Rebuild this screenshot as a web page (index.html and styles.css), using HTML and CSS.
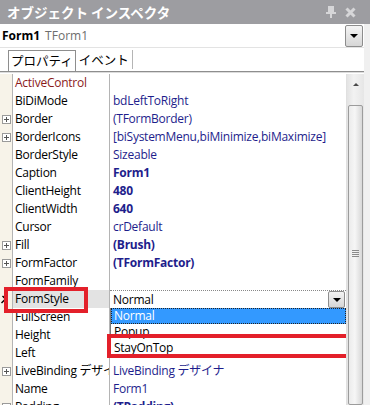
FILE: index.html
```html
<!DOCTYPE html>
<html lang="ja">

<head>
    <meta charset="UTF-8">
    <title>オブジェクト インスペクタ</title>
    <link rel="stylesheet" href="styles.css">
</head>

<body>

    <!-- Title bar -->
    <div class="titlebar">
        <span class="title">オブジェクト インスペクタ</span>
        <span class="title-icons">
            <svg width="10" height="12" viewBox="0 0 10 12">
                <rect x="2" y="0" width="6" height="6" fill="#d6d6d8"/>
                <rect x="0" y="6" width="10" height="2" fill="#d6d6d8"/>
                <rect x="4" y="8" width="2" height="4" fill="#d6d6d8"/>
            </svg>
            <svg width="11" height="11" viewBox="0 0 11 11">
                <path d="M1.5 1.5 L9.5 9.5 M9.5 1.5 L1.5 9.5" stroke="#d6d6d8" stroke-width="3"/>
            </svg>
        </span>
    </div>

    <div class="panel">
        <!-- Object selector -->
        <div class="selector">
            <span class="obj-name">Form1</span>
            <span class="obj-type">TForm1</span>
            <span class="combo-btn big"><i class="tri"></i></span>
        </div>

        <!-- Tabs -->
        <div class="tabs">
            <span class="tab active">プロパティ</span>
            <span class="tab">イベント</span>
        </div>

        <!-- Property grid -->
        <div class="grid-wrap">
            <div class="grid">
                <div class="row"><span class="gut"></span><span class="name red">ActiveControl</span><span class="val"></span></div>
                <div class="row"><span class="gut"></span><span class="name">BiDiMode</span><span class="val">bdLeftToRight</span></div>
                <div class="row"><span class="gut"><i class="plus"></i></span><span class="name">Border</span><span class="val">(TFormBorder)</span></div>
                <div class="row"><span class="gut"><i class="plus"></i></span><span class="name">BorderIcons</span><span class="val">[biSystemMenu,biMinimize,biMaximize]</span></div>
                <div class="row"><span class="gut"></span><span class="name">BorderStyle</span><span class="val">Sizeable</span></div>
                <div class="row"><span class="gut"></span><span class="name">Caption</span><span class="val bold">Form1</span></div>
                <div class="row"><span class="gut"></span><span class="name">ClientHeight</span><span class="val bold">480</span></div>
                <div class="row"><span class="gut"></span><span class="name">ClientWidth</span><span class="val bold">640</span></div>
                <div class="row"><span class="gut"></span><span class="name">Cursor</span><span class="val">crDefault</span></div>
                <div class="row"><span class="gut"><i class="plus"></i></span><span class="name">Fill</span><span class="val bold">(Brush)</span></div>
                <div class="row"><span class="gut"><i class="plus"></i></span><span class="name">FormFactor</span><span class="val bold">(TFormFactor)</span></div>
                <div class="row"><span class="gut"></span><span class="name">FormFamily</span><span class="val"></span></div>
                <div class="row current">
                    <span class="gut"><i class="pointer"></i></span>
                    <span class="name">FormStyle</span>
                    <span class="val edit">Normal<span class="combo-btn"><i class="tri"></i></span></span>
                </div>
                <div class="row"><span class="gut"></span><span class="name">FullScreen</span><span class="val"></span></div>
                <div class="row"><span class="gut"></span><span class="name">Height</span><span class="val"></span></div>
                <div class="row"><span class="gut"></span><span class="name">Left</span><span class="val"></span></div>
                <div class="row"><span class="gut"><i class="plus"></i></span><span class="name">LiveBinding デザイナ</span><span class="val">LiveBinding デザイナ</span></div>
                <div class="row"><span class="gut"></span><span class="name">Name</span><span class="val">Form1</span></div>
                <div class="row"><span class="gut"><i class="plus"></i></span><span class="name">Padding</span><span class="val bold">(TPadding)</span></div>

                <!-- Open drop-down list of FormStyle -->
                <div class="droplist">
                    <div class="item selected">Normal</div>
                    <div class="item">Popup</div>
                    <div class="item">StayOnTop</div>
                </div>

                <!-- Red annotation boxes -->
                <div class="mark mark-name"></div>
                <div class="mark mark-item"></div>
            </div>

            <!-- Vertical scrollbar -->
            <div class="scrollbar">
                <div class="arrow-up"></div>
                <div class="thumb"><i class="grip"></i></div>
            </div>
        </div>
    </div>

</body>

</html>
```

FILE: styles.css
```css
body {
    margin: 0;
    width: 370px;
    height: 405px;
    overflow: hidden;
    background-color: #f0f0f0;
    font-family: 'Open Sans', 'Noto Sans CJK JP', sans-serif;
    font-size: 12px;
    color: #000;
}

/* Title bar */
.titlebar {
    height: 24px;
    background-color: #9d9da1;
    display: flex;
    align-items: center;
    justify-content: space-between;
    padding: 0 14px 0 7px;
}

.title {
    color: #fff;
    font-family: 'Noto Sans CJK JP', sans-serif;
    font-weight: bold;
    font-size: 13.5px;
}

.title-icons {
    display: flex;
    align-items: center;
    gap: 9px;
}

/* Main panel */
.panel {
    width: 364px;
    background-color: #fff;
}

.selector {
    height: 23px;
    display: flex;
    align-items: center;
    padding-left: 2px;
    border-bottom: 1px solid #e3e3e3;
}

.obj-name {
    font-weight: bold;
    margin-right: 5px;
}

.obj-type {
    color: #6d6d6d;
}

.combo-btn {
    margin-left: auto;
    width: 15px;
    height: 15px;
    border: 1px solid #8d8d8d;
    border-radius: 2px;
    background: linear-gradient(#f4f4f4, #d6d6d6);
    display: flex;
    align-items: center;
    justify-content: center;
}

.combo-btn.big {
    width: 16px;
    height: 20px;
    margin-right: 1px;
}

.tri {
    width: 0;
    height: 0;
    border-left: 4px solid transparent;
    border-right: 4px solid transparent;
    border-top: 4px solid #000;
}

/* Tabs */
.tabs {
    height: 23px;
    display: flex;
    align-items: flex-end;
    padding-left: 8px;
    border-bottom: 1px solid #8e8e8e;
    box-shadow: 0 1px 0 #dcdcdc;
    font-family: 'Noto Sans CJK JP', sans-serif;
    font-size: 12.5px;
}

.tab {
    height: 19px;
    line-height: 19px;
    padding: 0 3px;
    border-right: 1px solid #b5b5b5;
    margin-bottom: 2px;
}

.tab.active {
    border: 1px solid #8e8e8e;
    border-bottom: none;
    margin-bottom: 0;
    height: 20px;
    padding: 0 2px;
}

/* Property grid */
.grid-wrap {
    display: flex;
    margin-top: 2px;
}

.grid {
    position: relative;
    flex: 1;
    height: 331px;
    overflow: hidden;
    letter-spacing: -0.25px;
}

.row {
    display: grid;
    grid-template-columns: 13px 97px 1fr;
    height: 18px;
    line-height: 18px;
}

.gut {
    background-color: #f7f3e9;
    border-right: 1px solid #b4b4b4;
    display: flex;
    align-items: center;
    justify-content: center;
}

.name {
    padding-left: 2px;
    border-right: 1px solid #b4b4b4;
    white-space: nowrap;
    overflow: hidden;
}

.name.red {
    color: #8b1a1a;
}

.val {
    padding-left: 3px;
    color: #1e1e8c;
    white-space: nowrap;
    overflow: hidden;
}

.val.bold {
    font-weight: bold;
}

.plus {
    width: 7px;
    height: 7px;
    border: 1px solid #9a9a9a;
    background:
        linear-gradient(#555, #555) center / 5px 1px no-repeat,
        linear-gradient(#555, #555) center / 1px 5px no-repeat,
        #fff;
}

.row.current .name {
    background-color: #e3e3e3;
}

.pointer {
    width: 5px;
    height: 7px;
    border-right: 2px solid #000;
    border-top: 2px solid #000;
    transform: scale(0.7) rotate(45deg);
    margin-left: -8px;
}

.val.edit {
    color: #000;
    display: flex;
    align-items: center;
    border-top: 1px dotted #888;
    padding-right: 1px;
}

/* Drop-down list */
.droplist {
    position: absolute;
    left: 110px;
    top: 234px;
    width: 235px;
    border: 1px solid #7a7a7a;
    border-top: none;
    background-color: #fff;
}

.item {
    height: 16px;
    line-height: 15px;
    padding-left: 3px;
}

.item.selected {
    background-color: #3399ff;
    color: #fff;
    outline: 1px dotted #222;
    outline-offset: -1px;
}

/* Red annotation boxes */
.mark {
    position: absolute;
    border: 4px solid #e3202a;
}

.mark-name {
    left: 4px;
    top: 213px;
    width: 76px;
    height: 18px;
}

.mark-item {
    left: 107px;
    top: 260px;
    width: 238px;
    height: 16px;
}

/* Scrollbar */
.scrollbar {
    width: 17px;
    height: 331px;
    background: linear-gradient(90deg, #e3e3e3, #f2f2f2 40%, #e6e6e6);
    border-left: 1px solid #e0e0e0;
    display: flex;
    flex-direction: column;
    align-items: center;
}

.arrow-up {
    margin-top: 9px;
    width: 0;
    height: 0;
    border-left: 3px solid transparent;
    border-right: 3px solid transparent;
    border-bottom: 3px solid #4a4a4a;
}

.thumb {
    margin-top: 19px;
    width: 13px;
    height: 320px;
    border: 1px solid #9c9c9c;
    border-radius: 2px;
    background: linear-gradient(90deg, #ebebeb, #f6f6f6 45%, #d8d8d8);
    position: relative;
}

.grip {
    position: absolute;
    left: 3px;
    top: 144px;
    width: 7px;
    height: 7px;
    background: repeating-linear-gradient(#8a8a8a 0 1px, transparent 1px 2px);
}
```
